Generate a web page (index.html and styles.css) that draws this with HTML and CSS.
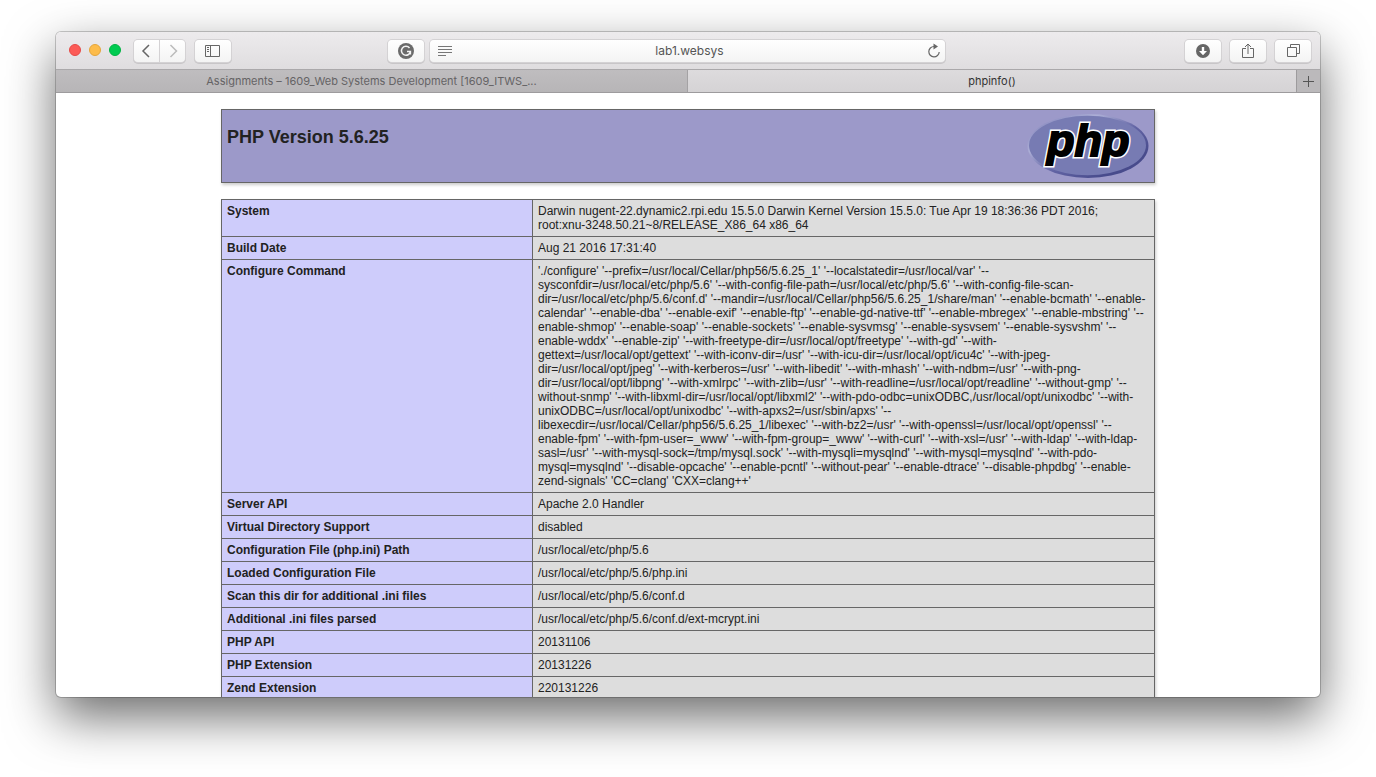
FILE: index.html
```html
<!DOCTYPE html>
<html lang="en">
<head>
<meta charset="utf-8">
<title>phpinfo()</title>
<link rel="stylesheet" href="styles.css">
</head>
<body>
<div class="window">
  <header class="toolbar">
    <div class="group">
      <div class="lights"><span class="light red"></span><span class="light amber"></span><span class="light green"></span></div>
      <div class="pair">
        <button class="btn back" aria-label="Back"><svg width="25" height="22" viewBox="0 0 25 22"><path d="M15 5 9 11l6 6" fill="none" stroke="#666" stroke-width="1.500"/></svg></button>
        <button class="btn forward" aria-label="Forward"><svg width="25" height="22" viewBox="0 0 25 22"><path d="M10.500 5l6 6-6 6" fill="none" stroke="#bbb" stroke-width="1.500"/></svg></button>
      </div>
      <button class="btn" aria-label="Sidebar"><svg width="16" height="14" viewBox="0 0 16 14" fill="none" stroke="#666"><path d="M.5 1.500h14v11H.5zM5.500 1.500v11"/><path d="M2 3.500h2M2 5.500h2M2 7.500h2"/></svg></button>
      <button class="btn push" aria-label="Grammarly"><svg width="16" height="16" viewBox="0 0 16 16"><circle cx="8" cy="8" r="8" fill="#6b6b6b"/><path d="M11.500 5A4.500 4.500 0 1 0 12.400 8.500H9M12.400 8.500v3" fill="none" stroke="#f5f5f5" stroke-width="1.500"/></svg></button>
    </div>
    <div class="address">
      <svg width="14" height="12" viewBox="0 0 14 12" stroke="#777"><path d="M0 1.500h14M0 4.500h14M0 7.500h14M0 10.500h8"/></svg>
      <input type="text" class="url" aria-label="Address" value="lab1.websys">
      <button class="reload" aria-label="Reload"><svg width="14" height="16" viewBox="0 0 14 16"><path d="M7.500 3.500H7a5.200 5.200 0 1 0 5.200 5.500" fill="none" stroke="#666" stroke-width="1.200"/><path d="M6.500.500 11 3.500l-4.500 3z" fill="#666"/></svg></button>
    </div>
    <div class="group end">
      <button class="btn" aria-label="Downloads"><svg width="14" height="14" viewBox="0 0 14 14"><circle cx="7" cy="7" r="7" fill="#666"/><path d="M5.800 3h2.400v4H11l-4 4.200L3 7h2.800z" fill="#fff"/></svg></button>
      <button class="btn" aria-label="Share"><svg width="12" height="16" viewBox="0 0 12 16" fill="none" stroke="#666"><path d="M4 5.500H.5v9h11v-9H8M6 11V1M3 4l3-3 3 3"/></svg></button>
      <button class="btn" aria-label="Show tabs"><svg width="13" height="13" viewBox="0 0 13 13" fill="none" stroke="#666"><path d="M.500 3.500h9v9h-9zM3.500 3.500v-3h9v9h-3"/></svg></button>
    </div>
  </header>
  <nav class="tabs">
    <button class="tab wide">Assignments – 1609_Web Systems Development [1609_ITWS_...</button>
    <button class="tab active">phpinfo()</button>
    <button class="add" aria-label="New tab"><svg width="11" height="11" viewBox="0 0 11 11"><path d="M0 5.500h11M5.500 0v11" stroke="#555"/></svg></button>
  </nav>
  <main class="page">
    <section class="banner">
      <h1>PHP Version 5.6.25</h1>
      <svg class="logo" width="122" height="66" viewBox="0 0 122 66" role="img" aria-label="PHP logo">
        <defs>
          <linearGradient id="rim" x1="0" y1="0" x2="1" y2="1"><stop offset=".1" stop-color="#8b8cc0"/><stop offset=".3" stop-color="#acaed6"/><stop offset=".55" stop-color="#6264a4"/><stop offset=".8" stop-color="#484b8c"/></linearGradient>
        </defs>
        <ellipse cx="61" cy="33" rx="60.500" ry="32" fill="url(#rim)"/>
        <ellipse cx="60.500" cy="32.500" rx="58.500" ry="29.800" fill="#777bb3"/>
        <g class="logo-text">
          <text x="20" y="43" class="logo-edge">php</text>
          <text x="20" y="43" class="logo-face">php</text>
        </g>
      </svg>
    </section>
    <table class="info">
      <tr><th scope="row">System</th><td>Darwin nugent-22.dynamic2.rpi.edu 15.5.0 Darwin Kernel Version 15.5.0: Tue Apr 19 18:36:36 PDT 2016;<br>root:xnu-3248.50.21~8/RELEASE_X86_64 x86_64</td></tr>
      <tr><th scope="row">Build Date</th><td>Aug 21 2016 17:31:40</td></tr>
      <tr><th scope="row">Configure Command</th><td>'./configure' '--prefix=/usr/local/Cellar/php56/5.6.25_1' '--localstatedir=/usr/local/var' '--<br>sysconfdir=/usr/local/etc/php/5.6' '--with-config-file-path=/usr/local/etc/php/5.6' '--with-config-file-scan-<br>dir=/usr/local/etc/php/5.6/conf.d' '--mandir=/usr/local/Cellar/php56/5.6.25_1/share/man' '--enable-bcmath' '--enable-<br>calendar' '--enable-dba' '--enable-exif' '--enable-ftp' '--enable-gd-native-ttf' '--enable-mbregex' '--enable-mbstring' '--<br>enable-shmop' '--enable-soap' '--enable-sockets' '--enable-sysvmsg' '--enable-sysvsem' '--enable-sysvshm' '--<br>enable-wddx' '--enable-zip' '--with-freetype-dir=/usr/local/opt/freetype' '--with-gd' '--with-<br>gettext=/usr/local/opt/gettext' '--with-iconv-dir=/usr' '--with-icu-dir=/usr/local/opt/icu4c' '--with-jpeg-<br>dir=/usr/local/opt/jpeg' '--with-kerberos=/usr' '--with-libedit' '--with-mhash' '--with-ndbm=/usr' '--with-png-<br>dir=/usr/local/opt/libpng' '--with-xmlrpc' '--with-zlib=/usr' '--with-readline=/usr/local/opt/readline' '--without-gmp' '--<br>without-snmp' '--with-libxml-dir=/usr/local/opt/libxml2' '--with-pdo-odbc=unixODBC,/usr/local/opt/unixodbc' '--with-<br>unixODBC=/usr/local/opt/unixodbc' '--with-apxs2=/usr/sbin/apxs' '--<br>libexecdir=/usr/local/Cellar/php56/5.6.25_1/libexec' '--with-bz2=/usr' '--with-openssl=/usr/local/opt/openssl' '--<br>enable-fpm' '--with-fpm-user=_www' '--with-fpm-group=_www' '--with-curl' '--with-xsl=/usr' '--with-ldap' '--with-ldap-<br>sasl=/usr' '--with-mysql-sock=/tmp/mysql.sock' '--with-mysqli=mysqlnd' '--with-mysql=mysqlnd' '--with-pdo-<br>mysql=mysqlnd' '--disable-opcache' '--enable-pcntl' '--without-pear' '--enable-dtrace' '--disable-phpdbg' '--enable-<br>zend-signals' 'CC=clang' 'CXX=clang++'</td></tr>
      <tr><th scope="row">Server API</th><td>Apache 2.0 Handler</td></tr>
      <tr><th scope="row">Virtual Directory Support</th><td>disabled</td></tr>
      <tr><th scope="row">Configuration File (php.ini) Path</th><td>/usr/local/etc/php/5.6</td></tr>
      <tr><th scope="row">Loaded Configuration File</th><td>/usr/local/etc/php/5.6/php.ini</td></tr>
      <tr><th scope="row">Scan this dir for additional .ini files</th><td>/usr/local/etc/php/5.6/conf.d</td></tr>
      <tr><th scope="row">Additional .ini files parsed</th><td>/usr/local/etc/php/5.6/conf.d/ext-mcrypt.ini</td></tr>
      <tr><th scope="row">PHP API</th><td>20131106</td></tr>
      <tr><th scope="row">PHP Extension</th><td>20131226</td></tr>
      <tr><th scope="row">Zend Extension</th><td>220131226</td></tr>
    </table>
  </main>
</div>
</body>
</html>
```

FILE: styles.css
```css
* { box-sizing: border-box; }
body {
  margin: 0;
  height: 100vh;
  padding: 32px 56px 80px;
  background: #fff;
  overflow: hidden;
  color: #222;
  font-family: "Liberation Sans", Arial, sans-serif;
}
button, input { font-family: Inter, sans-serif; border: 0; margin: 0; padding: 0; background: none; color: inherit; }
svg { display: block; }
.window {
  height: 100%;
  display: flex;
  flex-direction: column;
  border-radius: 5px;
  overflow: hidden;
  background: #fff;
  box-shadow: 0 0 0 1px rgba(0, 0, 0, .2), 0 20px 50px rgba(0, 0, 0, .58);
}
.toolbar {
  display: grid;
  grid-template-columns: minmax(0, 1fr) 41% minmax(0, 1fr);
  column-gap: 8px;
  align-items: center;
  height: 38px;
  padding: 0 9px 0 8px;
  background: linear-gradient(#edebed, #dfdddf);
  border-bottom: 1px solid #aaa8aa;
}
.group { display: flex; align-items: center; gap: 10px; }
.end { justify-content: flex-end; gap: 9px; }
.lights { display: flex; gap: 8px; margin: 0 3px 2px 5px; }
.light { width: 12px; height: 12px; border-radius: 50%; border: 1px solid; }
.red { background: #fc5b57; border-color: #e64a47; }
.amber { background: #fdbc4b; border-color: #e5a53a; }
.green { background: #00cb51; border-color: #00b343; }
.btn {
  width: 36px;
  height: 22px;
  display: flex;
  align-items: center;
  justify-content: center;
  border-radius: 4px;
  background: linear-gradient(#fff, #f4f4f4);
  box-shadow: 0 0 0 1px #d4d2d4, 0 1px 0 1px #c8c6c8;
}
.pair { display: flex; gap: 1px; }
.pair .btn { width: 25px; }
.pair .back { border-radius: 4px 0 0 4px; }
.pair .forward { border-radius: 0 4px 4px 0; }
.push { margin-left: auto; }
.address {
  display: flex;
  align-items: center;
  height: 22px;
  margin: 0 -2px;
  padding: 0 4px 0 8px;
  border-radius: 4px;
  background: linear-gradient(#fff, #f4f4f4);
  box-shadow: 0 0 0 1px #d4d2d4, 0 1px 0 1px #c8c6c8;
}
.url { flex: 1; min-width: 0; text-align: center; font-size: 12px; color: #555; }
.tabs { display: flex; height: 23px; border-bottom: 1px solid #9d9b9d; background: #bbb9bb; }
.tab { flex: 609 1 0; min-width: 0; font-size: 11px; color: #656365; background: linear-gradient(#bfbdbf, #b7b5b7); }
.wide { flex-grow: 632; border-right: 1px solid #a4a2a4; }
.active { background: linear-gradient(#dddbdd, #d5d3d5); color: #333; }
.add { width: 24px; display: flex; align-items: center; justify-content: center; border-left: 1px solid #9d9b9d; }
.page { flex: 1; min-height: 0; overflow: hidden; padding-top: 16px; }
.banner {
  width: 934px;
  max-width: 100%;
  height: 74px;
  margin: 0 auto 16px;
  padding: 3px 5px;
  display: flex;
  justify-content: space-between;
  border: 1px solid #666;
  background: #9c99c9;
  box-shadow: 1px 2px 3px #ccc;
}
h1 { margin: 13px 0 0; font-size: 18px; line-height: 22px; }
.logo-text {
  font: italic bold 45px "Liberation Sans", Arial, sans-serif;
  stroke-linejoin: miter;
}
.logo-edge { fill: #fff; stroke: #fff; stroke-width: 5px; }
.logo-face { fill: #000; stroke: #000; stroke-width: 2px; }
.info {
  width: 934px;
  max-width: 100%;
  margin: 0 auto;
  border-collapse: collapse;
  font-size: 12px;
  line-height: 14px;
  box-shadow: 1px 2px 3px #ccc;
}
th, td { border: 1px solid #666; padding: 4px 5px; text-align: left; vertical-align: top; }
th { width: 311px; background: #ceccfb; }
td { background: #ddd; white-space: nowrap; }
```
